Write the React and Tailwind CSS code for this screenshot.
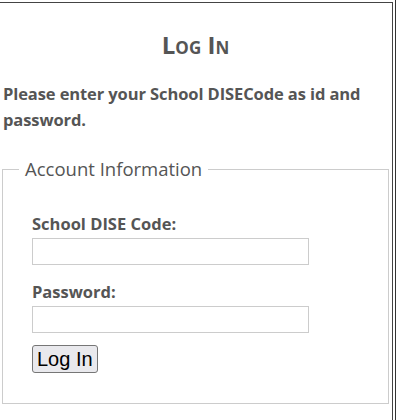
export default function App() {
  return (
    <div className="w-[397px] h-[420px] bg-white overflow-hidden relative" style={{ fontFamily: '"Open Sans", "Noto Sans", sans-serif' }}>
      <div className="absolute right-[1px] top-0 h-full w-[1px] bg-[#333]" />
      <div className="mt-[2px] w-[393px] h-[418px] border-t border-r border-[#444] pl-[2px] pr-[3px]">
        <h2 className="text-center text-[24px] font-bold text-[#555] mt-[25px] leading-[34px]" style={{ fontVariant: 'small-caps' }}>
          Log In
        </h2>
        <p className="mt-[19px] pl-[1px] text-[16.5px] font-bold text-[#555] leading-[26px] tracking-[-0.1px]">
          Please enter your School DISECode as id and password.
        </p>
        <fieldset className="mt-[24px] border border-[#ccc] px-[29px] pt-[32px] pb-[30px] min-w-0">
          <legend className="-ml-[13px] px-[6px] text-[18.5px] text-[#555] leading-[24px]">Account Information</legend>
          <div className="flex flex-col">
            <label className="text-[16.5px] font-bold text-[#555] leading-[22px]">School DISE Code:</label>
            <input type="text" className="mt-[3px] w-[277px] h-[27px] border border-[#ccc] bg-white" />
            <label className="mt-[16px] text-[16.5px] font-bold text-[#555] leading-[22px]">Password:</label>
            <input type="password" className="mt-[3px] w-[277px] h-[27px] border border-[#ccc] bg-white" />
            <div className="mt-[12px]">
              <button className="h-[28px] px-[4px] rounded-[3px] border border-[#767676] bg-[#e9e9ed] text-black text-[20px] leading-[26px]" style={{ fontFamily: '"Liberation Sans", Arial, sans-serif' }}>
                Log In
              </button>
            </div>
          </div>
        </fieldset>
      </div>
    </div>
  );
}
